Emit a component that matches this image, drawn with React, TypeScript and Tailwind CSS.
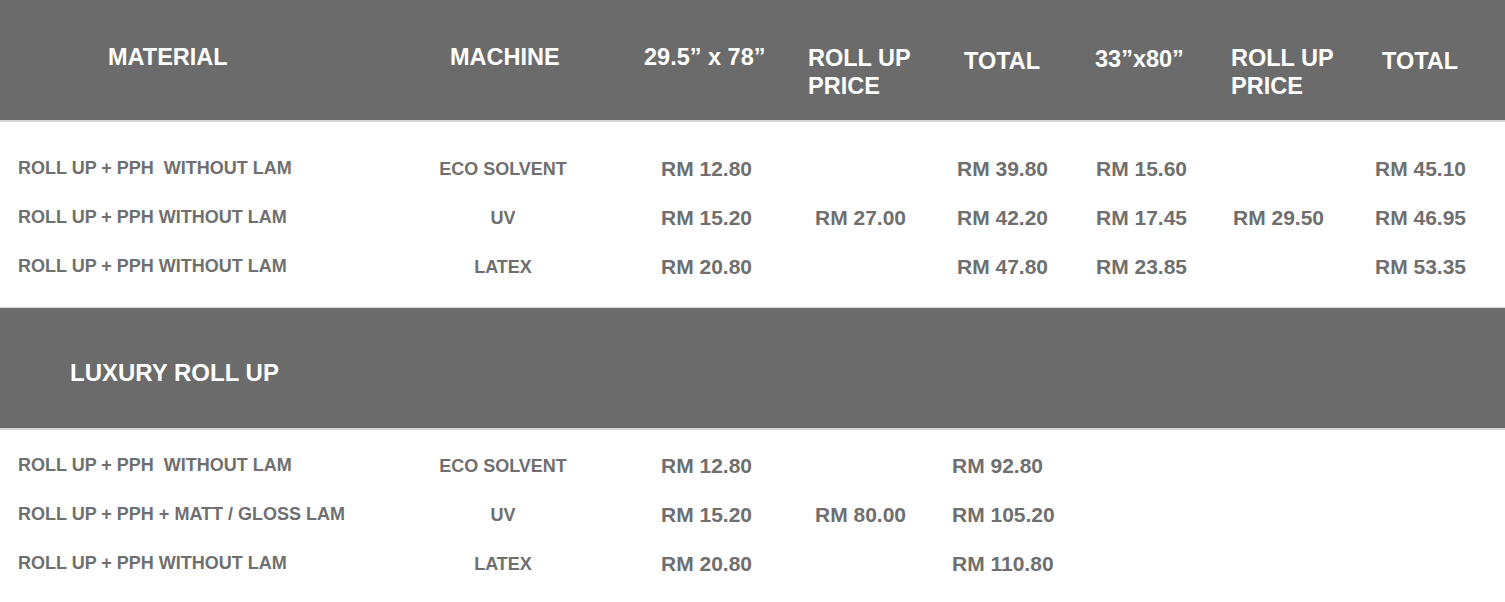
import React from "react";

const font = { fontFamily: '"Liberation Sans", Arial, Helvetica, sans-serif' };

type Row = { mat: string; mach: string; a: string; b: string; c: string; d: string; e: string; f: string };

const top: Row[] = [
  { mat: "ROLL UP + PPH  WITHOUT LAM", mach: "ECO SOLVENT", a: "RM 12.80", b: "", c: "RM 39.80", d: "RM 15.60", e: "", f: "RM 45.10" },
  { mat: "ROLL UP + PPH WITHOUT LAM", mach: "UV", a: "RM 15.20", b: "RM 27.00", c: "RM 42.20", d: "RM 17.45", e: "RM 29.50", f: "RM 46.95" },
  { mat: "ROLL UP + PPH WITHOUT LAM", mach: "LATEX", a: "RM 20.80", b: "", c: "RM 47.80", d: "RM 23.85", e: "", f: "RM 53.35" },
];

const bottom: Row[] = [
  { mat: "ROLL UP + PPH  WITHOUT LAM", mach: "ECO SOLVENT", a: "RM 12.80", b: "", c: "RM 92.80", d: "", e: "", f: "" },
  { mat: "ROLL UP + PPH + MATT / GLOSS LAM", mach: "UV", a: "RM 15.20", b: "RM 80.00", c: "RM 105.20", d: "", e: "", f: "" },
  { mat: "ROLL UP + PPH WITHOUT LAM", mach: "LATEX", a: "RM 20.80", b: "", c: "RM 110.80", d: "", e: "", f: "" },
];

const grid = "grid grid-cols-[420px_166px_204px_150px_135px_140px_145px_145px]";

function DataRow({ r, lux }: { r: Row; lux?: boolean }) {
  return (
    <div className={`${grid} h-[49px] items-center text-[#6f6f6f] font-bold`}>
      <div className="pl-[18px] text-[18px] whitespace-pre">{r.mat}</div>
      <div className="text-center text-[18px] pt-[2px]">{r.mach}</div>
      <div className="pl-[75px] text-[21px]">{r.a}</div>
      <div className="pl-[25px] text-[21px]">{r.b}</div>
      <div className={`${lux ? "pl-[12px]" : "pl-[17px]"} text-[21px]`}>{r.c}</div>
      <div className="pl-[21px] text-[21px]">{r.d}</div>
      <div className="pl-[18px] text-[21px]">{r.e}</div>
      <div className="pl-[15px] text-[21px]">{r.f}</div>
    </div>
  );
}

export default function App() {
  return (
    <div className="w-[1505px] h-[602px] bg-white overflow-hidden" style={font}>
      {/* header */}
      <div className={`${grid} h-[120px] bg-[#6b6b6b] text-white font-bold text-[23.5px] leading-[30px]`}>
        <div className="pl-[108px] pt-[42px]">MATERIAL</div>
        <div className="pl-[30px] pt-[42px]">MACHINE</div>
        <div className="pl-[58px] pt-[42px] whitespace-pre">29.5” x 78”</div>
        <div className="pl-[18px] pt-[44px] leading-[28px]">
          ROLL UP
          <br />
          PRICE
        </div>
        <div className="pl-[24px] pt-[46px]">TOTAL</div>
        <div className="pl-[20px] pt-[44px]">33”x80”</div>
        <div className="pl-[16px] pt-[44px] leading-[28px]">
          ROLL UP
          <br />
          PRICE
        </div>
        <div className="pl-[22px] pt-[46px]">TOTAL</div>
      </div>
      <div className="h-[2px] bg-[#d4d4d4]" />
      <div className="h-[185px] pt-[22px]">
        {top.map((r, i) => (
          <DataRow key={i} r={r} />
        ))}
      </div>
      <div className="h-[1px] bg-[#d4d4d4]" />
      <div className="h-[120px] bg-[#6b6b6b] flex items-center pl-[70px] pt-[10px] text-white font-bold text-[24px]">
        LUXURY ROLL UP
      </div>
      <div className="h-[2px] bg-[#d4d4d4]" />
      <div className="pt-[11px]">
        {bottom.map((r, i) => (
          <DataRow key={i} r={r} lux />
        ))}
      </div>
    </div>
  );
}
